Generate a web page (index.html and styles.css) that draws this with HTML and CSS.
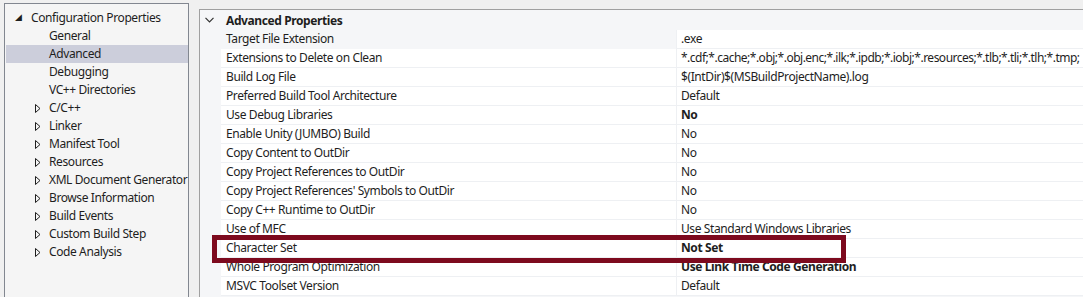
FILE: index.html
```html
<!DOCTYPE html>
<html lang="en">
<head>
    <meta charset="UTF-8">
    <title>Property Pages - Advanced</title>
    <link rel="stylesheet" href="styles.css">
</head>
<body>

<div class="page">
    <div class="tree">
        <div class="node root">
            <span class="arrow open">&#9698;</span>
            <span>Configuration Properties</span>
        </div>
        <div class="node leaf">General</div>
        <div class="node leaf selected">Advanced</div>
        <div class="node leaf">Debugging</div>
        <div class="node leaf">VC++ Directories</div>
        <div class="node branch"><svg class="arrow" width="6" height="9" viewBox="0 0 6 9"><path d="M0.5 0.5 L5 4.5 L0.5 8.5 Z" fill="none" stroke="#1e1e1e"/></svg>C/C++</div>
        <div class="node branch"><svg class="arrow" width="6" height="9" viewBox="0 0 6 9"><path d="M0.5 0.5 L5 4.5 L0.5 8.5 Z" fill="none" stroke="#1e1e1e"/></svg>Linker</div>
        <div class="node branch"><svg class="arrow" width="6" height="9" viewBox="0 0 6 9"><path d="M0.5 0.5 L5 4.5 L0.5 8.5 Z" fill="none" stroke="#1e1e1e"/></svg>Manifest Tool</div>
        <div class="node branch"><svg class="arrow" width="6" height="9" viewBox="0 0 6 9"><path d="M0.5 0.5 L5 4.5 L0.5 8.5 Z" fill="none" stroke="#1e1e1e"/></svg>Resources</div>
        <div class="node branch"><svg class="arrow" width="6" height="9" viewBox="0 0 6 9"><path d="M0.5 0.5 L5 4.5 L0.5 8.5 Z" fill="none" stroke="#1e1e1e"/></svg>XML Document Generator</div>
        <div class="node branch"><svg class="arrow" width="6" height="9" viewBox="0 0 6 9"><path d="M0.5 0.5 L5 4.5 L0.5 8.5 Z" fill="none" stroke="#1e1e1e"/></svg>Browse Information</div>
        <div class="node branch"><svg class="arrow" width="6" height="9" viewBox="0 0 6 9"><path d="M0.5 0.5 L5 4.5 L0.5 8.5 Z" fill="none" stroke="#1e1e1e"/></svg>Build Events</div>
        <div class="node branch"><svg class="arrow" width="6" height="9" viewBox="0 0 6 9"><path d="M0.5 0.5 L5 4.5 L0.5 8.5 Z" fill="none" stroke="#1e1e1e"/></svg>Custom Build Step</div>
        <div class="node branch"><svg class="arrow" width="6" height="9" viewBox="0 0 6 9"><path d="M0.5 0.5 L5 4.5 L0.5 8.5 Z" fill="none" stroke="#1e1e1e"/></svg>Code Analysis</div>
    </div>

    <div class="grid">
        <div class="category">
            <svg class="chevron" width="9" height="6" viewBox="0 0 9 6"><path d="M0.5 0.8 L4.5 4.8 L8.5 0.8" fill="none" stroke="#333" stroke-width="1.2"/></svg>
            <span>Advanced Properties</span>
        </div>
        <div class="rows">
            <div class="row first"><div class="name">Target File Extension</div><div class="value">.exe</div></div>
            <div class="row"><div class="name">Extensions to Delete on Clean</div><div class="value tight">*.cdf;*.cache;*.obj;*.obj.enc;*.ilk;*.ipdb;*.iobj;*.resources;*.tlb;*.tli;*.tlh;*.tmp;</div></div>
            <div class="row"><div class="name">Build Log File</div><div class="value">$(IntDir)$(MSBuildProjectName).log</div></div>
            <div class="row"><div class="name">Preferred Build Tool Architecture</div><div class="value">Default</div></div>
            <div class="row"><div class="name">Use Debug Libraries</div><div class="value bold">No</div></div>
            <div class="row"><div class="name">Enable Unity (JUMBO) Build</div><div class="value">No</div></div>
            <div class="row"><div class="name">Copy Content to OutDir</div><div class="value">No</div></div>
            <div class="row"><div class="name">Copy Project References to OutDir</div><div class="value">No</div></div>
            <div class="row"><div class="name">Copy Project References' Symbols to OutDir</div><div class="value">No</div></div>
            <div class="row"><div class="name">Copy C++ Runtime to OutDir</div><div class="value">No</div></div>
            <div class="row"><div class="name">Use of MFC</div><div class="value">Use Standard Windows Libraries</div></div>
            <div class="row marked"><div class="name">Character Set</div><div class="value bold">Not Set</div><div class="highlight"></div></div>
            <div class="row"><div class="name">Whole Program Optimization</div><div class="value bold">Use Link Time Code Generation</div></div>
            <div class="row"><div class="name">MSVC Toolset Version</div><div class="value">Default</div></div>
        </div>
    </div>
</div>

</body>
</html>
```

FILE: styles.css
```css
body {
    margin: 0;
    background: #f0f0f0;
    font-family: "Noto Sans", "Open Sans", sans-serif;
    font-size: 12px;
    letter-spacing: -0.4px;
    color: #1e1e1e;
    overflow: hidden;
    height: 297px;
}

.page {
    display: flex;
    align-items: flex-start;
    padding: 3px 0 0 4px;
}

/* left tree */
.tree {
    width: 185px;
    height: 320px;
    flex-shrink: 0;
    background: #f5f5f5;
    border: 1px solid #828790;
    padding-top: 5px;
    box-sizing: border-box;
}
.node {
    height: 18px;
    line-height: 18px;
    display: flex;
    align-items: center;
    white-space: nowrap;
    margin-left: 1px;
}
.node.root { padding-left: 9px; }
.root .arrow.open {
    font-size: 9px;
    width: 16px;
    flex-shrink: 0;
    color: #1e1e1e;
    position: relative;
    top: -1px;
}
.node.leaf { padding-left: 43px; }
.node.branch { padding-left: 29px; }
.branch .arrow {
    flex-shrink: 0;
    margin-right: 8px;
}
.node.selected { background: #cccedb; }

/* right property grid */
.grid {
    flex: 1;
    margin: 6px 0 0 10px;
    background: #f5f6f8;
    border-left: 1px solid #a0a0a0;
    border-top: 1px solid #a0a0a0;
    height: 320px;
    overflow: hidden;
}
.category {
    height: 20px;
    display: flex;
    align-items: center;
    font-weight: bold;
    white-space: nowrap;
}
.chevron { margin: 0 12px 0 5px; }

.rows { padding-left: 21px; }
.row {
    display: flex;
    height: 19px;
    line-height: 18px;
    white-space: nowrap;
    position: relative;
}
.name {
    width: 450px;
    flex-shrink: 0;
    padding-left: 5px;
    background: #fff;
    border-bottom: 1px solid #eef0f3;
}
.value {
    flex: 1;
    padding-left: 4px;
    background: #fff;
    border-left: 1px solid #eef0f3;
    border-bottom: 1px solid #eef0f3;
    overflow: hidden;
}
.value.tight { letter-spacing: -0.5px; }
.row.first .name {
    background: #f5f6f8;
    border-bottom-color: #f5f6f8;
}
.bold { font-weight: bold; }

.highlight {
    position: absolute;
    z-index: 1;
    left: -9px;
    top: -4px;
    width: 634px;
    height: 28px;
    border: 5px solid #7d0a1e;
    box-sizing: border-box;
}
```
